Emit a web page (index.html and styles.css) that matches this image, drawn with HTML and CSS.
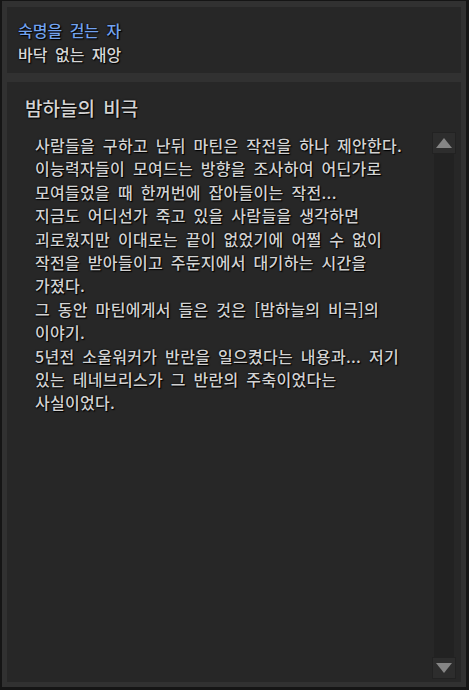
FILE: index.html
```html
<!DOCTYPE html>
<html lang="ko">
<head>
    <meta charset="UTF-8">
    <meta name="viewport" content="width=device-width, initial-scale=1.0">
    <title>밤하늘의 비극</title>
    <link rel="stylesheet" href="styles.css">
</head>
<body>
    <div class="frame">
        <div class="panel quest-info">
            <div class="quest-chapter">숙명을 걷는 자</div>
            <div class="quest-name">바닥 없는 재앙</div>
        </div>
        <div class="panel story">
            <h2 class="story-title">밤하늘의 비극</h2>
            <div class="scroll-area">
                <p class="story-text">
                    사람들을 구하고 난뒤 마틴은 작전을 하나 제안한다.<br>
                    이능력자들이 모여드는 방향을 조사하여 어딘가로<br>
                    모여들었을 때 한꺼번에 잡아들이는 작전...<br>
                    지금도 어디선가 죽고 있을 사람들을 생각하면<br>
                    괴로웠지만 이대로는 끝이 없었기에 어쩔 수 없이<br>
                    작전을 받아들이고 주둔지에서 대기하는 시간을<br>
                    가졌다.<br>
                    그 동안 마틴에게서 들은 것은 [밤하늘의 비극]의<br>
                    이야기.<br>
                    5년전 소울워커가 반란을 일으켰다는 내용과... 저기<br>
                    있는 테네브리스가 그 반란의 주축이었다는<br>
                    사실이었다.
                </p>
                <div class="scrollbar">
                    <div class="sb-btn">
                        <svg width="16" height="10" viewBox="0 0 16 10"><polygon points="8,0 16,10 0,10" fill="#858585"/></svg>
                    </div>
                    <div class="sb-track"></div>
                    <div class="sb-btn">
                        <svg width="16" height="10" viewBox="0 0 16 10"><polygon points="0,0 16,0 8,10" fill="#858585"/></svg>
                    </div>
                </div>
            </div>
        </div>
    </div>
</body>
</html>
```

FILE: styles.css
```css
html, body {
    margin: 0;
    padding: 0;
    background-color: #151515;
}
body {
    font-family: "Noto Sans CJK KR", "Noto Sans", sans-serif;
    font-weight: 500;
}
.frame {
    width: 469px;
    height: 690px;
    box-sizing: border-box;
    border: solid #151515;
    border-width: 1px 3px 3px 2px;
    background-color: #313131;
    padding: 6px 5px 5px 5px;
    display: flex;
    flex-direction: column;
    gap: 9px;
}
.panel {
    background-color: #272727;
    box-sizing: border-box;
}
.quest-info {
    height: 66px;
    padding: 11px 11px 0 11px;
    font-size: 16px;
    line-height: 24px;
    word-spacing: 3px;
    text-shadow: 0 0 2px #000, 1px 1px 1px #000;
}
.quest-chapter {
    color: #72a2ee;
}
.quest-name {
    color: #d6d6d6;
}
.story {
    flex: 1;
    display: flex;
    flex-direction: column;
    padding: 13px 5px 3px 18px;
    min-height: 0;
}
.story-title {
    margin: 0;
    font-size: 19px;
    font-weight: 500;
    line-height: 26px;
    word-spacing: 3px;
    color: #d4d4d4;
    text-shadow: 0 0 2px #000, 1px 1px 1px #000;
}
.scroll-area {
    flex: 1;
    display: flex;
    margin-top: 11px;
    min-height: 0;
}
.story-text {
    flex: 1;
    margin: 0;
    padding: 2px 0 0 10px;
    font-size: 16px;
    line-height: 23.4px;
    letter-spacing: 0.3px;
    word-spacing: 3px;
    color: #d2d2d2;
    white-space: nowrap;
    text-shadow: 0 0 2px #000, 1px 1px 1px #000;
}
.scrollbar {
    width: 24px;
    display: flex;
    flex-direction: column;
    align-items: center;
}
.sb-btn {
    width: 24px;
    height: 22px;
    box-sizing: border-box;
    background-color: #2d2d2d;
    border: 1px solid #222;
    display: flex;
    align-items: center;
    justify-content: center;
}
.sb-track {
    flex: 1;
    width: 20px;
    background-color: #222;
}
```
